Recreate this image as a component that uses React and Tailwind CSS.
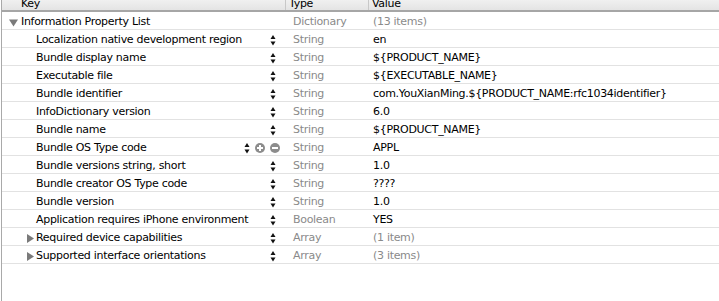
import React from 'react';

const rows = [
  { key: 'Localization native development region', type: 'String', value: 'en' },
  { key: 'Bundle display name', type: 'String', value: '${PRODUCT_NAME}' },
  { key: 'Executable file', type: 'String', value: '${EXECUTABLE_NAME}' },
  { key: 'Bundle identifier', type: 'String', value: 'com.YouXianMing.${PRODUCT_NAME:rfc1034identifier}' },
  { key: 'InfoDictionary version', type: 'String', value: '6.0' },
  { key: 'Bundle name', type: 'String', value: '${PRODUCT_NAME}' },
  { key: 'Bundle OS Type code', type: 'String', value: 'APPL', selected: true },
  { key: 'Bundle versions string, short', type: 'String', value: '1.0' },
  { key: 'Bundle creator OS Type code', type: 'String', value: '????' },
  { key: 'Bundle version', type: 'String', value: '1.0' },
  { key: 'Application requires iPhone environment', type: 'Boolean', value: 'YES' },
  { key: 'Required device capabilities', type: 'Array', value: '(1 item)', dim: true, expand: true },
  { key: 'Supported interface orientations', type: 'Array', value: '(3 items)', dim: true, expand: true },
];

const Stepper = () => (
  <svg width="6" height="12" viewBox="0 0 6 12" className="block">
    <path d="M3 1 L5.5 5 L0.5 5 Z" fill="#111" />
    <path d="M0.5 7.5 L5.5 7.5 L3 11.5 Z" fill="#111" />
  </svg>
);

const Circle = ({ minus }) => (
  <svg width="10" height="10" viewBox="0 0 10 10" className="block">
    <circle cx="5" cy="5" r="5" fill="#8c8c8c" />
    <rect x="2" y="4" width="6" height="2" fill="#fff" />
    {!minus && <rect x="4" y="2" width="2" height="6" fill="#fff" />}
  </svg>
);

const Disclosure = ({ open }) => (
  <svg width="9" height="9" viewBox="0 0 9 9" className="block">
    {open ? (
      <path d="M0 1.5 L9 1.5 L4.5 8.5 Z" fill="#7a7a7a" />
    ) : (
      <path d="M1 0 L8 4.5 L1 9 Z" fill="#7a7a7a" />
    )}
  </svg>
);

export default function App() {
  const font = { fontFamily: '"DejaVu Sans", "Liberation Sans", sans-serif' };
  return (
    <div className="w-[719px] h-[301px] bg-white overflow-hidden text-[11px] tracking-[-0.3px] text-black flex" style={font}>
      <div className="w-[2px] bg-[#a9a9a9] border-l border-white shrink-0" />
      <div className="flex-1 flex flex-col">
        {/* header */}
        <div className="h-[12px] shrink-0 flex bg-gradient-to-b from-[#f0f0f0] to-[#e4e4e4] border-b-2 border-[#a6a6a6] overflow-hidden">
          <div className="w-[284px] pl-[19px] leading-[10px] -mt-[1px] border-r border-[#c8c8c8]">Key</div>
          <div className="w-[83px] pl-[3px] leading-[10px] -mt-[1px] border-r border-[#c8c8c8]">Type</div>
          <div className="flex-1 pl-[3px] leading-[10px] -mt-[1px]">Value</div>
        </div>
        {/* root row */}
        <div className="h-[18px] pt-[3px] flex items-center border-b border-[#e2e2e2]">
          <div className="w-[284px] flex items-center">
            <div className="w-[19px] pl-[7px] flex">
              <Disclosure open />
            </div>
            <span>Information Property List</span>
          </div>
          <div className="w-[83px] pl-[7px] text-[#8a8a8a]">Dictionary</div>
          <div className="flex-1 pl-[4px] text-[#8a8a8a]">(13 items)</div>
        </div>
        {rows.map((r) => (
          <div key={r.key} className="h-[18px] pt-[3px] flex items-center border-b border-[#e2e2e2]">
            <div className="w-[284px] flex items-center">
              <div className="w-[34px] pl-[24px] flex">
                {r.expand && <Disclosure />}
              </div>
              <span className="flex-1 whitespace-nowrap">{r.key}</span>
              {r.selected ? (
                <div className="flex items-center gap-[5px] mr-[6px]">
                  <Stepper />
                  <Circle />
                  <Circle minus />
                </div>
              ) : (
                <div className="mr-[10px]">
                  <Stepper />
                </div>
              )}
            </div>
            <div className="w-[83px] pl-[7px] text-[#8a8a8a]">{r.type}</div>
            <div className={`flex-1 pl-[4px] whitespace-nowrap ${r.dim ? 'text-[#8a8a8a]' : ''}`}>{r.value}</div>
          </div>
        ))}
      </div>
    </div>
  );
}
